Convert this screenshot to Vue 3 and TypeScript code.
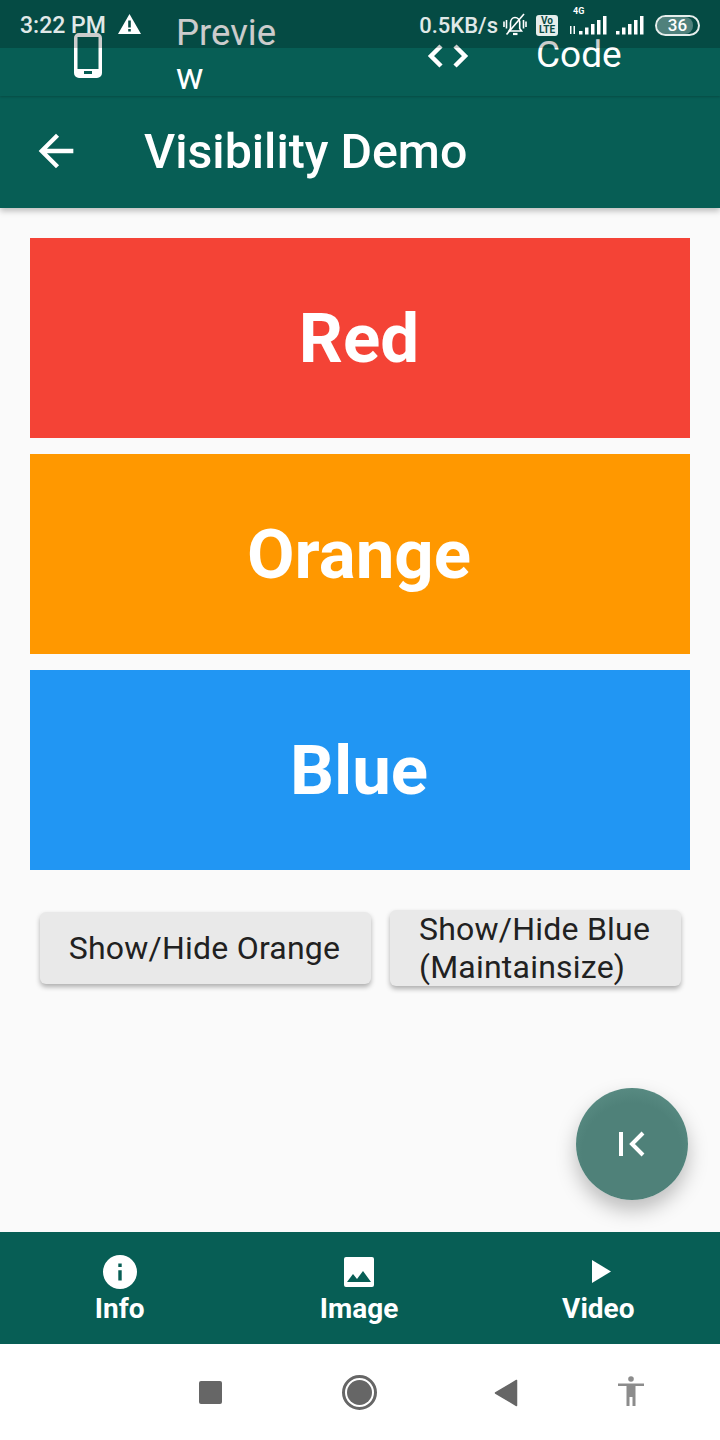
<script setup lang="ts">
const boxes = [
  { label: 'Red', color: '#f44336' },
  { label: 'Orange', color: '#ff9800' },
  { label: 'Blue', color: '#2196f3' }
];
</script>

<template>
  <div class="page">
    <div class="status">
      <div class="status-left">
        <span class="time">3:22 PM</span>
        <svg class="warn" width="23" height="20" viewBox="0 0 23 20">
          <path fill="#fff" fill-rule="evenodd" d="M11.500 0 23 20H0ZM10.200 6.500v7h2.600v-7Zm0 8.500v2.500h2.600V15Z" />
        </svg>
      </div>
      <div class="status-right">
        <span class="speed">0.5KB/s</span>
        <svg class="bell" width="24" height="23" viewBox="0 0 24 23" fill="none" stroke="#fff" stroke-width="1.600">
          <path d="M6 18h12.500l-1.800-2.500V10c0-3-2-5.500-4.700-5.500S7.500 7 7.500 10v5.500Z" />
          <path d="M10 21h4.500" stroke-width="2.200" />
          <path d="M3.500 21.500 21 1" />
          <path d="M1 8.500v5.500M3.500 7v8.500M20.500 7v8.500M23 8.500V14" />
        </svg>
        <span class="volte">Vo<br />LTE</span>
        <div class="net">
          <span class="net-label">4G</span>
          <svg width="38" height="20" viewBox="0 0 38 20" fill="#fff">
            <path d="M1 11h1.500v8H1ZM4.500 11H6v8H4.500Z" />
            <path d="M10 16h3.500v3.500H10ZM16 12.500h3.500v7H16ZM22 9h3.500v10.500H22ZM28 5h3.500v14.500H28ZM34 1h3.500v18.500H34Z" />
          </svg>
        </div>
        <svg class="signal" width="28" height="20" viewBox="0 0 28 20" fill="#fff">
          <path d="M0 16h3.500v3.500H0ZM6 12.500h3.500v7H6ZM12 9h3.500v10.500H12ZM18 5h3.500v14.500H18ZM24 1h3.500v18.500H24Z" />
        </svg>
        <div class="battery">
          <span class="battery-fill"></span>
          <span class="battery-text">36</span>
        </div>
      </div>
    </div>

    <div class="tabs">
      <div class="tab">
        <svg class="tab-icon" width="28" height="45" viewBox="0 0 28 45">
          <path fill="#fff" fill-rule="evenodd" d="M5 0h18a5 5 0 0 1 5 5v35a5 5 0 0 1-5 5H5a5 5 0 0 1-5-5V5a5 5 0 0 1 5-5Zm-1.500 4v32h21V4ZM10 38v3h8v-3Z" />
        </svg>
        <span class="tab-label preview">Preview</span>
      </div>
      <div class="tab">
        <svg class="tab-icon code-icon" width="42" height="26" viewBox="0 0 42 26" fill="none" stroke="#fff" stroke-width="4.500">
          <path d="M14 3 4 13l10 10M28 3l10 10-10 10" />
        </svg>
        <span class="tab-label">Code</span>
      </div>
    </div>

    <header class="appbar">
      <svg width="52" height="52" viewBox="0 0 24 24">
        <path fill="#fff" d="M20 11H7.830l5.590-5.590L12 4l-8 8 8 8 1.410-1.410L7.830 13H20z" />
      </svg>
      <h1>Visibility Demo</h1>
    </header>

    <main class="content">
      <div v-for="box in boxes" :key="box.label" class="box" :style="{ background: box.color }">{{ box.label }}</div>
      <div class="actions">
        <button class="btn btn-left">Show/Hide Orange</button>
        <button class="btn btn-right">Show/Hide Blue (Maintainsize)</button>
      </div>
      <div class="fab">
        <svg width="28" height="26" viewBox="0 0 28 26" fill="none" stroke="#fff" stroke-width="4">
          <path d="M3 1v24" />
          <path d="M25 2 14 13l11 11" />
        </svg>
      </div>
    </main>

    <nav class="bottom">
      <div class="bottom-item">
        <svg width="34" height="34" viewBox="0 0 34 34">
          <path fill="#fff" fill-rule="evenodd" d="M17 0a17 17 0 1 1 0 34 17 17 0 0 1 0-34Zm-1.700 8.500v3.400h3.400V8.500Zm0 6.800v10.200h3.400V15.300Z" />
        </svg>
        <span>Info</span>
      </div>
      <div class="bottom-item">
        <svg width="34" height="34" viewBox="0 0 34 34">
          <path fill="#fff" fill-rule="evenodd" d="M4 2h26a2 2 0 0 1 2 2v26a2 2 0 0 1-2 2H4a2 2 0 0 1-2-2V4a2 2 0 0 1 2-2Zm1 25h24l-8-11-6 8-4-5Z" />
        </svg>
        <span>Image</span>
      </div>
      <div class="bottom-item">
        <svg width="34" height="34" viewBox="0 0 34 34">
          <path fill="#fff" d="M11 5 30 16.500 11 28Z" />
        </svg>
        <span>Video</span>
      </div>
    </nav>

    <div class="sysnav">
      <span class="sys-square"></span>
      <span class="sys-home"><span></span></span>
      <svg class="sys-back" width="24" height="28" viewBox="0 0 24 28">
        <path fill="#666" stroke="#666" stroke-width="1.500" stroke-linejoin="round" d="M1.500 14 22.500 1.500v25Z" />
      </svg>
      <svg class="sys-access" width="28" height="30" viewBox="0 0 28 30">
        <circle cx="14" cy="3" r="2.800" fill="#8c8c8c" />
        <path fill="#8c8c8c" d="M1 7.500h26V10h-8.500v20h-3v-9h-3v9h-3V10H1Z" />
      </svg>
    </div>
  </div>
</template>

<style scoped>
.page {
  position: relative;
  display: flex;
  flex-direction: column;
  width: 720px;
  height: 1440px;
  overflow: hidden;
  background: #fafafa;
  font-family: Roboto, sans-serif;
}

.status {
  position: absolute;
  top: 0;
  left: 0;
  right: 0;
  z-index: 5;
  display: flex;
  justify-content: space-between;
  align-items: center;
  height: 48px;
  padding: 2px 20px 0;
  box-sizing: border-box;
  background: rgba(0, 0, 0, 0.2);
  color: #fff;
}

.status-left,
.status-right {
  display: flex;
  align-items: center;
}

.time {
  font-size: 23px;
  font-weight: 500;
  opacity: 0.88;
}

.warn {
  margin: -2px 0 0 12px;
}

.speed {
  font-size: 22px;
  font-weight: 500;
  margin-right: 5px;
  opacity: 0.88;
}

.bell {
  margin-top: -2px;
}

.volte {
  width: 22px;
  height: 20px;
  margin-left: 9px;
  padding-top: 1px;
  border-radius: 3px;
  background: #e6eeec;
  color: #0a4b44;
  font-size: 10px;
  font-weight: 700;
  line-height: 9.500px;
  text-align: center;
}

.net {
  position: relative;
  margin-left: 11px;
  display: flex;
}

.net-label {
  position: absolute;
  top: -9px;
  left: 4px;
  font-size: 9px;
  font-weight: 700;
}

.signal {
  margin-left: 9px;
}

.battery {
  position: relative;
  width: 45px;
  height: 21px;
  margin-left: 11px;
  box-sizing: border-box;
  border: 2px solid #e6eeec;
  border-radius: 11px;
  overflow: hidden;
  text-align: center;
}

.battery-fill {
  position: absolute;
  left: 0;
  top: 0;
  bottom: 0;
  width: 36px;
  background: rgba(255, 255, 255, 0.3);
  border-radius: 8px;
}

.battery-text {
  position: relative;
  display: block;
  font-size: 17px;
  font-weight: 500;
  line-height: 17px;
}

.tabs {
  display: flex;
  flex: none;
  height: 96px;
  background: #075e55;
  box-shadow: 0 1px 2px rgba(0, 0, 0, 0.2);
  position: relative;
  z-index: 1;
}

.tab {
  display: flex;
  width: 360px;
  align-items: flex-start;
}

.tab:first-child .tab-icon {
  margin: 33px 0 0 74px;
}

.tab-label {
  color: #fff;
  font-size: 37px;
  line-height: 44px;
}

.preview {
  width: 110px;
  margin: 11px 0 0 74px;
  font-size: 36.500px;
  line-height: 44px;
  word-break: break-all;
}

.code-icon {
  margin: 43px 0 0 67px;
}

.tab:last-child .tab-label {
  margin: 33px 0 0 67px;
}

.appbar {
  display: flex;
  flex: none;
  align-items: center;
  height: 112px;
  padding: 0 0 2px 30px;
  box-sizing: border-box;
  background: #075e55;
  box-shadow: 0 3px 6px rgba(0, 0, 0, 0.25);
  position: relative;
}

.appbar h1 {
  margin: 0 0 0 62px;
  color: #fff;
  font-size: 48.300px;
  font-weight: 500;
}

.content {
  position: relative;
  display: flex;
  flex: 1;
  flex-direction: column;
  gap: 16px;
  padding: 30px 30px 0;
}

.box {
  display: flex;
  align-items: center;
  justify-content: center;
  height: 200px;
  padding: 1px 2px 0 0;
  box-sizing: border-box;
  color: #fff;
  font-size: 69px;
  font-weight: 700;
}

.actions {
  display: flex;
  align-items: center;
  gap: 19px;
  margin: 24px 0 0 10px;
}

.btn {
  padding: 0;
  border: 0;
  border-radius: 6px;
  background: #e9e9e9;
  color: #212121;
  font-family: Roboto, sans-serif;
  font-size: 32px;
  letter-spacing: 0.22px;
  line-height: 38px;
  box-shadow: 0 3px 5px rgba(0, 0, 0, 0.3);
}

.btn-left {
  width: 331px;
  height: 72px;
  padding-right: 2px;
}

.btn-right {
  width: 291px;
  height: 76px;
  padding: 0 29px;
  text-align: left;
}

.fab {
  position: absolute;
  right: 32px;
  bottom: 32px;
  display: flex;
  align-items: center;
  justify-content: center;
  width: 112px;
  height: 112px;
  border-radius: 50%;
  background: radial-gradient(circle at 50% 58%, #4f8179 58%, #63968d 100%);
  box-shadow: 0 10px 20px rgba(0, 0, 0, 0.25);
}

.bottom {
  display: flex;
  flex: none;
  height: 112px;
  background: #075e55;
}

.bottom-item {
  display: flex;
  flex: 1;
  flex-direction: column;
  align-items: center;
  padding-top: 23px;
  color: #fff;
  font-size: 28px;
  font-weight: 700;
  line-height: 40px;
}

.bottom-item:last-child {
  padding-right: 2px;
}

.sysnav {
  position: relative;
  flex: none;
  height: 96px;
  background: #fff;
}

.sys-square {
  position: absolute;
  left: 199px;
  top: 37px;
  width: 23px;
  height: 23px;
  border-radius: 2px;
  background: #666;
}

.sys-home {
  position: absolute;
  left: 342px;
  top: 31px;
  display: flex;
  align-items: center;
  justify-content: center;
  width: 35px;
  height: 35px;
  box-sizing: border-box;
  border: 3px solid #666;
  border-radius: 50%;
}

.sys-home span {
  width: 25px;
  height: 25px;
  border-radius: 50%;
  background: #666;
}

.sys-back {
  position: absolute;
  left: 494px;
  top: 35px;
}

.sys-access {
  position: absolute;
  left: 617px;
  top: 32px;
}
</style>
